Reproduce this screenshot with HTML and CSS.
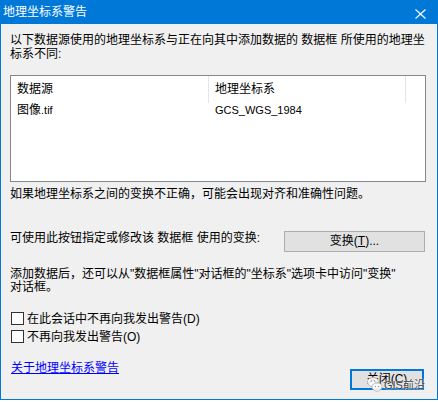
FILE: index.html
```html
<!DOCTYPE html>
<html lang="zh-CN">
<head>
    <meta charset="UTF-8">
    <title>地理坐标系警告</title>
    <link rel="stylesheet" href="styles.css">
</head>
<body>
    <div class="window">
        <div class="titlebar">
            <span class="title">地理坐标系警告</span>
            <svg class="close" width="11" height="10" viewBox="0 0 11 10">
                <path d="M0.5 0.5 L10.5 9.5 M10.5 0.5 L0.5 9.5" stroke="#fff" stroke-width="1.1" fill="none"/>
            </svg>
        </div>

        <div class="content">
            <p class="intro">以下数据源使用的地理坐标系与正在向其中添加数据的 数据框 所使用的地理坐<br>标系不同:</p>

            <div class="listbox">
                <div class="list-header">
                    <div class="cell">数据源</div>
                    <div class="cell">地理坐标系</div>
                    <div class="cell cell-end"></div>
                </div>
                <div class="list-row">
                    <div class="cell">图像<span class="latin">.tif</span></div>
                    <div class="cell latin">GCS_WGS_1984</div>
                </div>
            </div>

            <p class="warning">如果地理坐标系之间的变换不正确，可能会出现对齐和准确性问题。</p>

            <div class="transform-row">
                <span class="transform-text">可使用此按钮指定或修改该 数据框 使用的变换:</span>
                <button class="btn btn-transform">变换(<u>T</u>)...</button>
            </div>

            <p class="hint">添加数据后，还可以从"数据框属性"对话框的"坐标系"选项卡中访问"变换"<br>对话框。</p>

            <div class="checks">
                <label class="check"><span class="box"></span>在此会话中不再向我发出警告(D)</label>
                <label class="check"><span class="box"></span>不再向我发出警告(O)</label>
            </div>

            <div class="footer">
                <a class="link" href="#">关于地理坐标系警告</a>
                <button class="btn btn-close">关闭(C)</button>
            </div>
        </div>

        <div class="watermark">
            <svg width="16" height="18" viewBox="0 0 16 18">
                <ellipse cx="6" cy="7" rx="5.5" ry="4.6" fill="#fff" stroke="#b8b8b8" stroke-width="1"/>
                <ellipse cx="10" cy="12" rx="5" ry="4.2" fill="#fff" stroke="#b8b8b8" stroke-width="1"/>
                <circle cx="4.2" cy="6" r="0.8" fill="#999"/>
                <circle cx="7.6" cy="6" r="0.8" fill="#999"/>
                <circle cx="8.4" cy="11.5" r="0.7" fill="#999"/>
                <circle cx="11.6" cy="11.5" r="0.7" fill="#999"/>
            </svg>
            <span>GIS前沿</span>
        </div>
    </div>
</body>
</html>
```

FILE: styles.css
```css
body {
    margin: 0;
    background-color: #ffffff;
    font-family: "Liberation Sans", "Noto Sans CJK SC", sans-serif;
    font-size: 12px;
    color: #000;
}
.window {
    position: relative;
    width: 438px;
    height: 400px;
    box-sizing: border-box;
    border: 1px solid #0078d7;
    border-top: none;
    background-color: #f0f0f0;
}
.titlebar {
    display: flex;
    justify-content: space-between;
    align-items: flex-start;
    height: 24px;
    margin: 0 -1px;
    padding: 0 12px 0 3px;
    background-color: #0078d7;
    color: #fff;
}
.title {
    line-height: 25px;
}
.close {
    margin-top: 9px;
}
.content {
    padding: 0 11px 0 9px;
}
p {
    margin: 0;
    line-height: 13.5px;
}
.intro {
    margin-top: 10px;
    white-space: nowrap;
}
.listbox {
    margin-top: 14px;
    height: 107px;
    box-sizing: border-box;
    border: 1px solid #828790;
    background-color: #fff;
}
.list-header,
.list-row {
    display: grid;
    grid-template-columns: 198px 197px 1fr;
}
.list-header {
    height: 25px;
}
.list-header .cell {
    line-height: 27px;
    border-right: 1px solid #e5e5e5;
}
.list-header .cell-end {
    border-right: none;
}
.cell {
    padding-left: 6px;
    box-sizing: border-box;
    white-space: nowrap;
}
.list-row .cell {
    line-height: 18px;
}
.latin {
    font-size: 11px;
}
.warning {
    margin-top: 6px;
}
.transform-row {
    display: flex;
    justify-content: space-between;
    align-items: flex-start;
    margin-top: 29px;
}
.transform-text {
    margin-top: 1px;
    line-height: 13px;
}
.btn {
    font-family: inherit;
    font-size: 12px;
    color: #000;
    background-color: #e1e1e1;
    border: 1px solid #adadad;
    padding: 0;
    height: 21px;
    line-height: 18px;
}
.btn-transform {
    width: 141px;
    margin-right: 1px;
}
.hint {
    margin-top: 16px;
    white-space: nowrap;
}
.checks {
    margin-top: 15px;
}
.check {
    display: flex;
    align-items: center;
    height: 18px;
    gap: 3px;
    line-height: 18px;
}
.box {
    width: 13px;
    height: 13px;
    box-sizing: border-box;
    border: 1px solid #333;
    background-color: #fff;
    margin-left: 1px;
}
.footer {
    display: flex;
    justify-content: space-between;
    align-items: flex-start;
    margin-top: 16px;
}
.link {
    color: #0000ff;
    line-height: 13px;
    margin-left: 1px;
}
.btn-close {
    width: 74px;
    margin-top: 7px;
    margin-right: 2px;
    border: 2px solid #0078d7;
    line-height: 16px;
}
.watermark {
    position: absolute;
    left: 366px;
    top: 375px;
    display: flex;
    align-items: center;
    gap: 1px;
    opacity: 0.9;
}
.watermark span {
    font-size: 11px;
    color: #333;
    text-shadow: 0 0 2px #fff, 0 0 1px #fff;
}
```
